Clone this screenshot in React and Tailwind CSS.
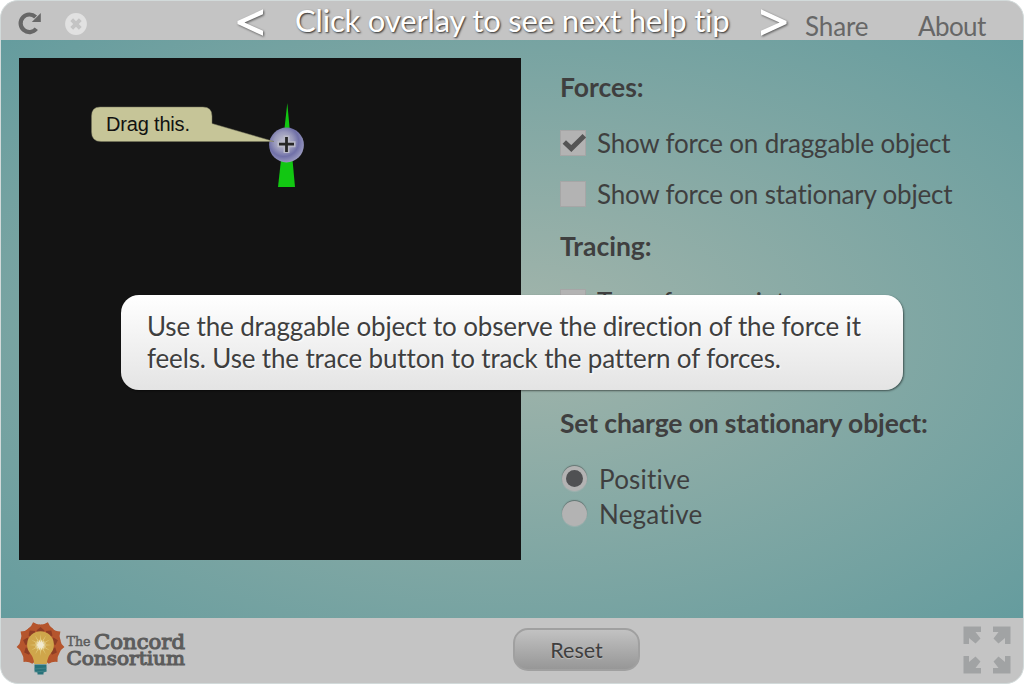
import React from "react";

const PETALS = [-135, -95, -56, -18, 18, 56, 95, 135];
const PETAL_SEAMS = [-115, -75, -37, 0, 37, 75, 115];
const RAYS = Array.from({ length: 12 }, (_, i) => i * 30);

function ReloadIcon() {
  return (
    <svg className="h-[24px] w-[24px]" viewBox="0 0 24 24">
      <path d="M18.3 17.8A8.8 8.8 0 1 1 17.6 6" fill="none" stroke="#676767" strokeWidth="4.2" />
      <path d="M22.8 2V11H13.8Z" fill="#676767" />
    </svg>
  );
}

function StopIcon() {
  return (
    <svg className="h-[22px] w-[22px]" viewBox="0 0 22 22">
      <circle cx="11" cy="11" r="10.9" fill="#e1e1e1" />
      <path d="M6.7 6.7l8.6 8.6M15.3 6.7l-8.6 8.6" stroke="#c4c4c4" strokeWidth="4" />
    </svg>
  );
}

function Chevron({ right }) {
  return (
    <svg className="h-[30px] w-[28px] drop-shadow-[1px_1px_1px_rgba(0,0,0,0.55)]" viewBox="0 0 28 30">
      {right ? (
        <path d="M1 0.3V5.2L19.5 13.5L1 21.8V26.8L26.5 15.1V12Z" fill="#fff" />
      ) : (
        <path d="M27 0.3V5.2L8.5 13.5L27 21.8V26.8L1.5 15.1V12Z" fill="#fff" />
      )}
    </svg>
  );
}

function Simulation() {
  return (
    <svg className="h-[502px] w-[502px] shrink-0 bg-[#131313]" viewBox="0 0 502 502">
      <defs>
        <radialGradient id="charge" cx="0.42" cy="0.4" r="0.6">
          <stop offset="0" stopColor="#c0c0ce" />
          <stop offset="0.45" stopColor="#9a9abc" />
          <stop offset="0.72" stopColor="#7070a8" />
          <stop offset="1" stopColor="#9696bd" />
        </radialGradient>
      </defs>
      <path d="M268.3 45L276 129H259Z" fill="#12c712" />
      <circle cx="267.5" cy="87" r="17.4" fill="url(#charge)" />
      <path d="M267.5 77.5v17.5M258.5 86.2h18" stroke="#b9b9c8" strokeWidth="6" />
      <path d="M267.5 79v15M260 86.2h15" stroke="#262626" strokeWidth="2.8" />
      <path
        d="M81 49H184Q193 49 193 58V65.5L255 83.5H82Q72.5 83.5 72.5 74V58Q72.5 49 81 49Z"
        fill="#c6c598"
        stroke="#77765c"
        strokeWidth="0.5"
      />
      <text x="87" y="73" fontSize="20" fill="#111" fontFamily="'Liberation Sans', Arial, sans-serif" textLength="84">
        Drag this.
      </text>
    </svg>
  );
}

function Checkbox({ label, checked, className }) {
  return (
    <div className={"flex h-[32px] items-center " + className}>
      <div className="h-[26px] w-[26px] shrink-0 border border-[#a6a6a6] bg-[#b3b3b3]">
        {checked && (
          <svg className="h-[24px] w-[26px]" viewBox="0 0 26 24">
            <path d="M3.3 11L10.3 17.5L23.3 4.8" fill="none" stroke="#545454" strokeWidth="5" />
          </svg>
        )}
      </div>
      <span className="ml-[11px] whitespace-nowrap tracking-[-0.19px]">{label}</span>
    </div>
  );
}

function Radio({ label, checked }) {
  return (
    <div className="flex h-[35px] items-center">
      <div className="ml-[2px] flex h-[25px] w-[25px] shrink-0 items-center justify-center rounded-full bg-[#b3b3b3] shadow-[0_-1px_1px_rgba(60,60,60,0.5),0_1px_1px_rgba(190,190,190,0.4)]">
        {checked && <div className="h-[17px] w-[17px] rounded-full bg-[#505153]" />}
      </div>
      <span className="ml-[12px] tracking-[0.22px]">{label}</span>
    </div>
  );
}

function Logo() {
  return (
    <svg className="h-[56px] w-[172px]" viewBox="0 0 172 56">
      <g transform="translate(24.5 23)">
        {PETALS.map((a) => (
          <path key={a} d="M0 0L-8 -13L-7.5 -19Q-3 -20 0 -24Q3 -20 7.5 -19L8 -13Z" transform={`rotate(${a})`} fill="#b5552d" />
        ))}
        {PETAL_SEAMS.map((a) => (
          <path key={a} d="M0 -9L-4 -14.5L0 -18L4 -14.5Z" transform={`rotate(${a})`} fill="#8e3d25" />
        ))}
        <path d="M-6.3 19Q-6.5 13 -10.5 8A13.4 13.4 0 1 1 10.5 8Q6.5 13 6.3 19Z" fill="#cfa64b" />
        {RAYS.map((a) => (
          <path key={a} d="M-1 0L0 -11L1 0Z" transform={`rotate(${a})`} fill="#e2cb7c" />
        ))}
        {RAYS.map((a) => (
          <path key={a} d="M-1.4 0L0 -6L1.4 0Z" transform={`rotate(${a + 15})`} fill="#f1ead0" />
        ))}
        <path d="M-6 19.5H6V26.5L3 27.5V29.5H-3V27.5L-6 26.5Z" fill="#27727a" />
        <path d="M-6 24L6 23M-6 27L6 26" stroke="#4d8a8c" strokeWidth="0.7" />
      </g>
      <g fill="#5c5c5c" stroke="#5c5c5c" strokeWidth="1.1" fontFamily="'DejaVu Serif', serif">
        <text x="50.5" y="23.5" fontSize="13" strokeWidth="0.5" textLength="24" lengthAdjust="spacingAndGlyphs">The</text>
        <text x="78" y="26.5" fontSize="21" textLength="91" lengthAdjust="spacingAndGlyphs">Concord</text>
        <text x="50.5" y="43" fontSize="19" textLength="118.5" lengthAdjust="spacingAndGlyphs">Consortium</text>
      </g>
    </svg>
  );
}

function FullscreenIcon() {
  const arrow = "M0 0H17.5V5.5H12L17 12L12 17L5.5 11.5V17.5H0Z";
  return (
    <svg className="h-[48px] w-[48px]" viewBox="0 0 48 48" fill="#a1a3a4">
      <path d={arrow} transform="translate(0.5 0.5)" />
      <path d={arrow} transform="translate(47.5 0.5) scale(-1 1)" />
      <path d={arrow} transform="translate(0.5 47.5) scale(1 -1)" />
      <path d={arrow} transform="translate(47.5 47.5) scale(-1 -1)" />
    </svg>
  );
}

export default function App() {
  return (
    <div className="h-[684px] w-[1024px] overflow-hidden bg-white font-['Lato',sans-serif] text-[26px] leading-[32px] text-[#3f3f3f] [font-variant-ligatures:none]">
      <div className="relative flex h-full flex-col overflow-hidden rounded-[18px] border border-[#d2dada] bg-[#c4c4c4]">
        <header className="flex h-[39px] shrink-0 items-start text-[#676767]">
          <div className="ml-[17px] mt-[10px]"><ReloadIcon /></div>
          <div className="ml-[23px] mt-[12px]"><StopIcon /></div>
          <div className="ml-[149px] mt-[8px]"><Chevron /></div>
          <div className="ml-[31px] mt-[3px] w-[435px] whitespace-nowrap text-[31px] tracking-[-0.18px] text-white [text-shadow:1px_1px_2px_rgba(0,0,0,0.8)]">
            Click overlay to see next help tip
          </div>
          <div className="ml-[30px] mt-[8px]"><Chevron right /></div>
          <div className="ml-[17px] mt-[9px] w-[113px] tracking-[-0.1px]">Share</div>
          <div className="mt-[9px] tracking-[-0.6px]">About</div>
        </header>

        <main className="flex h-[578px] shrink-0 bg-[radial-gradient(ellipse_at_center,#a3b5ab,#659c9e)] pl-[18px] pt-[18px]">
          <Simulation />
          <section className="ml-[39px] w-[420px]">
            <h2 className="mt-[13px] text-[26.5px] font-bold">Forces:</h2>
            <Checkbox className="mt-[24px]" label="Show force on draggable object" checked />
            <Checkbox className="mt-[19px]" label="Show force on stationary object" />
            <h2 className="mt-[20px] text-[26.5px] font-bold">Tracing:</h2>
            <Checkbox className="mt-[24px]" label="Trace force points" />
            <h2 className="mt-[89px] text-[26.5px] font-bold tracking-[-0.13px] whitespace-nowrap">Set charge on stationary object:</h2>
            <div className="mt-[22px]">
              <Radio label="Positive" checked />
              <Radio label="Negative" />
            </div>
          </section>
        </main>

        <footer className="flex h-[65px] shrink-0 items-start">
          <div className="ml-[15px] mt-[4px]"><Logo /></div>
          <button className="ml-[325px] mt-[10px] h-[43px] w-[127px] rounded-[15px] border-2 border-[#a0a0a0] bg-linear-to-b from-[#c2c2c2] to-[#979797] text-[21.5px] [text-shadow:0_1px_1px_rgba(255,255,255,0.3)]">
            Reset
          </button>
          <div className="ml-[323px] mt-[8px]"><FullscreenIcon /></div>
        </footer>

        <div className="absolute left-[120px] top-[294px] h-[95px] w-[782px] rounded-[18px] bg-linear-to-b from-white to-[#e4e4e4] pl-[26px] pt-[15px] whitespace-nowrap tracking-[-0.15px] shadow-[1px_1px_2px_rgba(0,0,0,0.5)] [text-shadow:1px_1px_2px_white]">
          Use the draggable object to observe the direction of the force it
          <br />
          feels. Use the trace button to track the pattern of forces.
        </div>
      </div>
    </div>
  );
}
